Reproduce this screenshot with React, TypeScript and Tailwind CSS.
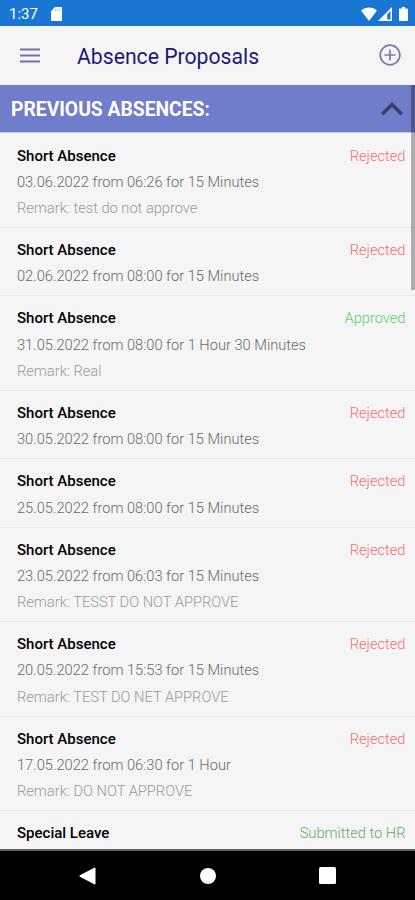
import type { FC } from 'react';

type Status = 'Rejected' | 'Approved' | 'Submitted to HR';

interface Absence {
  type: string;
  status: Status;
  period?: string;
  remark?: string;
}

const absences: Absence[] = [
  {
    type: 'Short Absence',
    status: 'Rejected',
    period: '03.06.2022 from 06:26 for 15 Minutes',
    remark: 'test do not approve',
  },
  {
    type: 'Short Absence',
    status: 'Rejected',
    period: '02.06.2022 from 08:00 for 15 Minutes',
  },
  {
    type: 'Short Absence',
    status: 'Approved',
    period: '31.05.2022 from 08:00 for 1 Hour 30 Minutes',
    remark: 'Real',
  },
  {
    type: 'Short Absence',
    status: 'Rejected',
    period: '30.05.2022 from 08:00 for 15 Minutes',
  },
  {
    type: 'Short Absence',
    status: 'Rejected',
    period: '25.05.2022 from 08:00 for 15 Minutes',
  },
  {
    type: 'Short Absence',
    status: 'Rejected',
    period: '23.05.2022 from 06:03 for 15 Minutes',
    remark: 'TESST DO NOT APPROVE',
  },
  {
    type: 'Short Absence',
    status: 'Rejected',
    period: '20.05.2022 from 15:53 for 15 Minutes',
    remark: 'TEST DO NET APPROVE',
  },
  {
    type: 'Short Absence',
    status: 'Rejected',
    period: '17.05.2022 from 06:30 for 1 Hour',
    remark: 'DO NOT APPROVE',
  },
  {
    type: 'Special Leave',
    status: 'Submitted to HR',
  },
];

const statusColors: Record<Status, string> = {
  Rejected: 'text-[#f76c6c]',
  Approved: 'text-[#54d45f]',
  'Submitted to HR': 'text-[#5cae60]',
};

const StatusBar: FC = () => (
  <div className="flex h-[25.5px] shrink-0 items-center bg-[#1976d2] pt-0.5 pr-[7px] pl-[9px] text-white">
    <span className="w-[42px] pt-px text-[15px] leading-none">1:37</span>
    <svg width="11" height="14" viewBox="0 0 11 14" fill="currentColor">
      <path d="M4 0h6a1 1 0 0 1 1 1v12a1 1 0 0 1-1 1H1a1 1 0 0 1-1-1V4.2z" />
      <path d="M4.6 2v2M6.7 2v2M8.8 2v2" stroke="#8dbbe9" strokeWidth="0.8" />
    </svg>
    <div className="ml-auto flex items-center">
      <svg width="16" height="14" viewBox="0 0 16 14" fill="currentColor">
        <path d="M0 3.4C4.5-.5 11.5-.5 16 3.4L8 14z" />
      </svg>
      <svg className="ml-px" width="14" height="14" viewBox="0 0 14 14">
        <path d="M0 14 14 0v14z" fill="currentColor" />
        <path d="M9.2 7.2 12.5 3.9v8.7H9.2z" fill="#1976d2" />
      </svg>
      <svg className="ml-[7px]" width="9" height="14" viewBox="0 0 9 14" fill="currentColor">
        <path d="M3 0h3v1.4h2.2a.8.8 0 0 1 .8.8v11a.8.8 0 0 1-.8.8H.8a.8.8 0 0 1-.8-.8v-11a.8.8 0 0 1 .8-.8H3z" />
      </svg>
    </div>
  </div>
);

const TopBar: FC = () => (
  <header className="flex h-[59.5px] shrink-0 items-center pr-[14px] pl-5">
    <button type="button" aria-label="Menu" className="w-[57px]">
      <svg width="20" height="15" viewBox="0 0 20 15" stroke="#7770a5" strokeWidth="2">
        <path d="M0 1.5h20M0 7.5h20M0 13.5h20" />
      </svg>
    </button>
    <h1 className="pt-[3px] text-[21.2px] leading-none text-[#21177a]">
      Absence Proposals
    </h1>
    <button type="button" aria-label="Add" className="ml-auto">
      <svg width="22" height="22" viewBox="0 0 22 22" fill="none" stroke="#8078ae" strokeWidth="1.7">
        <circle cx="11" cy="11" r="9.8" />
        <path d="M11 5.5v11M5.5 11h11" />
      </svg>
    </button>
  </header>
);

const AbsenceRow: FC<{ absence: Absence }> = ({ absence }) => (
  <li className="border-b border-[#ebebeb] pt-[9px] pr-[9.5px] pb-[5.7px] pl-[17px] text-[14.65px] leading-[26.3px] font-light">
    <div className="flex justify-between">
      <span className="text-[15px] font-medium text-black">{absence.type}</span>
      <span className={statusColors[absence.status]}>{absence.status}</span>
    </div>
    {absence.period && <p className="text-[#6a6a6a]">{absence.period}</p>}
    {absence.remark && (
      <p className="text-[#9a9a9a]">Remark: {absence.remark}</p>
    )}
  </li>
);

const NavigationBar: FC = () => (
  <nav className="flex h-[51px] shrink-0 items-center border-t-2 border-[#626262] bg-black pr-[79px] pl-[79px] text-white">
    <svg width="17" height="18" viewBox="0 0 17 18" fill="currentColor">
      <path d="M15.3.8A.8.8 0 0 1 16.5 1.4v15.2a.8.8 0 0 1-1.2.6L.9 9.7a.8.8 0 0 1 0-1.4z" />
    </svg>
    <div className="mx-auto size-4 rounded-full bg-white" />
    <div className="size-[17px] rounded-[1.5px] bg-white" />
  </nav>
);

export default function App() {
  return (
    <div className="flex h-[900px] w-[415px] flex-col overflow-hidden bg-[#f5f5f5] font-['Roboto',sans-serif]">
      <StatusBar />
      <TopBar />
      <main className="relative min-h-0 flex-1 overflow-hidden">
        <div className="flex h-[48px] items-center justify-between border-b border-[#cfc3e2] bg-[#707dcb] pr-3 pl-[11px]">
          <h2 className="pt-[3px] text-[19.3px] leading-none font-bold text-white">
            PREVIOUS ABSENCES:
          </h2>
          <svg width="22" height="14" viewBox="0 0 22 14" fill="none" stroke="#363f6b" strokeWidth="3.4">
            <path d="M1.3 12.2 11 2.5l9.7 9.7" />
          </svg>
        </div>
        <ul className="pt-[0.6px]">
          {absences.map((absence, i) => (
            <AbsenceRow key={i} absence={absence} />
          ))}
        </ul>
        {/* scroll indicator */}
        <div className="absolute top-0 right-0 h-[205px] w-1 bg-black/30" />
      </main>
      <NavigationBar />
    </div>
  );
}
